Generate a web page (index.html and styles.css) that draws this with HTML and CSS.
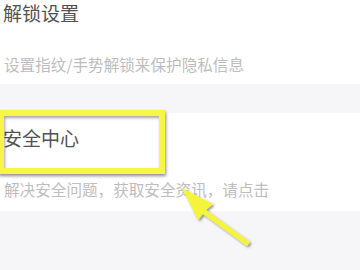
FILE: index.html
```html
<!doctype html>
<html lang="zh-CN">
  <head>
    <meta charset="UTF-8" />
    <meta name="viewport" content="width=device-width, initial-scale=1.0" />
    <title>设置</title>
    <link rel="stylesheet" href="styles.css">
  </head>
  <body>
    <div class="section first">
      <div class="item-title">解锁设置</div>
      <div class="item-desc">设置指纹/手势解锁来保护隐私信息</div>
    </div>
    <div class="section second">
      <div class="item-title">安全中心</div>
      <div class="item-desc">解决安全问题，获取安全资讯，请点击</div>
      <div class="highlight"></div>
    </div>
    <div class="rest"></div>
    <svg class="arrow" width="90" height="80" viewBox="0 0 90 80">
      <defs>
        <filter id="sh" x="-20%" y="-20%" width="140%" height="140%">
          <feDropShadow dx="1.5" dy="1.5" stdDeviation="1" flood-color="#000" flood-opacity="0.45" />
        </filter>
      </defs>
      <g filter="url(#sh)" fill="#f4f43c">
        <polygon points="12,8 43,24 36,30 80,62 77,66 33,34 28,40" />
      </g>
    </svg>
  </body>
</html>
```
FILE: styles.css
```css
body {
  margin: 0;
  padding: 0;
  width: 360px;
  height: 270px;
  overflow: hidden;
  background-color: #f6f6f8;
  font-family: "Noto Sans CJK SC", "Noto Sans", sans-serif;
  position: relative;
}
.section {
  background-color: #fff;
  padding: 0 4px;
  position: relative;
}
.section.first {
  padding-top: 0;
  padding-bottom: 8px;
  margin-bottom: 29px;
}
.section.second {
  padding-top: 12px;
  padding-bottom: 10px;
}
.item-title {
  font-size: 19px;
  line-height: 26px;
  color: #525252;
  margin-left: -1px;
}
.item-desc {
  font-size: 15.6px;
  line-height: 24px;
  color: #bdbdbd;
  margin-top: 26px;
}
.highlight {
  position: absolute;
  left: -2px;
  top: -3px;
  width: 155px;
  height: 52px;
  border: 6px solid #f6f548;
  box-shadow: 1px 2px 3px rgba(0, 0, 0, 0.45), inset 1px 2px 3px rgba(0, 0, 0, 0.35);
}
.arrow {
  position: absolute;
  left: 170px;
  top: 180px;
}
```
